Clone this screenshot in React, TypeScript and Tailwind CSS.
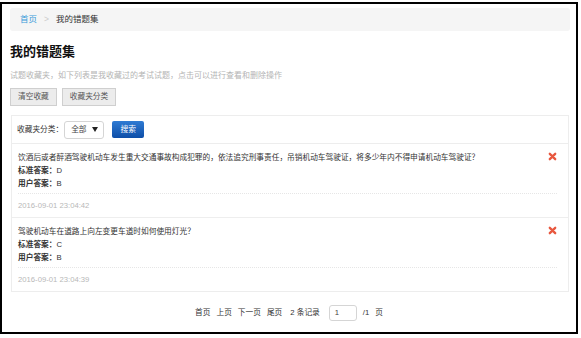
const font = { fontFamily: '"Liberation Sans", "Noto Sans CJK SC", sans-serif' };

type Fav = { q: string; std: string; user: string; time: string };

const favs: Fav[] = [
  {
    q: "饮酒后或者醉酒驾驶机动车发生重大交通事故构成犯罪的，依法追究刑事责任，吊销机动车驾驶证，将多少年内不得申请机动车驾驶证？",
    std: "D",
    user: "B",
    time: "2016-09-01 23:04:42",
  },
  {
    q: "驾驶机动车在道路上向左变更车道时如何使用灯光？",
    std: "C",
    user: "B",
    time: "2016-09-01 23:04:39",
  },
];

const CloseIcon = () => (
  <svg width="9" height="9" viewBox="0 0 10 10" className="shrink-0 mt-[1px]">
    <path d="M2 2 L8 8 M8 2 L2 8" stroke="#e8583f" strokeWidth="2.6" strokeLinecap="round" />
  </svg>
);

const FavItem = ({ item, last }: { item: Fav; last?: boolean }) => (
  <div className={`px-[6px] pt-[7px] pb-[5px] ${last ? "" : "border-b border-[#eeeeee]"}`}>
    <div className="flex justify-between pr-[5px]">
      <div className="leading-[13px] text-[#333]">
        <div>{item.q}</div>
        <div>
          <span className="font-bold">标准答案：</span>
          {item.std}
        </div>
        <div>
          <span className="font-bold">用户答案：</span>
          {item.user}
        </div>
      </div>
      <CloseIcon />
    </div>
    <div className="mt-[3px] mr-[5px] border-t border-dotted border-[#e6e6e6]" />
    <div className="pt-[5px] leading-[13px] text-[#b8b8b8]">{item.time}</div>
  </div>
);

export default function App() {
  return (
    <div className="w-[581px] h-[338px] bg-white pt-[2px] text-[7.7px]" style={font}>
      <div className="w-[578px] h-[332px] border-2 border-black px-[6px] pt-[4px]">
        {/* breadcrumb */}
        <div className="ml-[2px] h-[23px] bg-[#f5f5f5] rounded-[3px] flex items-center px-[10px] gap-[7px] text-[8.5px]">
          <span className="text-[#3a9bd9]">首页</span>
          <span className="text-[#cccccc]">&gt;</span>
          <span className="text-[#333]">我的错题集</span>
        </div>

        <div className="ml-[2px] mt-[13px] text-[13px] font-bold leading-[16px] text-[#111]">我的错题集</div>
        <div className="ml-[2px] mt-[10px] text-[8px] leading-[12px] text-[#b4b4b4]">
          试题收藏夹，如下列表是我收藏过的考试试题，点击可以进行查看和删除操作
        </div>

        <div className="ml-[2px] mt-[6px] flex gap-[5px]">
          <button className="h-[18px] px-[7px] bg-[#ececec] border border-[#cfcfcf] text-[#555]">清空收藏</button>
          <button className="h-[18px] px-[7px] bg-[#ececec] border border-[#cfcfcf] text-[#555]">收藏夹分类</button>
        </div>

        <div className="ml-[3px] mr-[1px] mt-[9px] border border-[#ededed]">
          <div className="h-[28px] flex items-center px-[5px] border-b border-[#ededed] text-[#333]">
            <span>收藏夹分类：</span>
            <div className="ml-[1px] w-[40px] h-[18px] border border-[#d5d5d5] rounded-[3px] flex items-center justify-between pl-[6px] pr-[5px] text-[#444]">
              <span className="mt-[1px]">全部</span>
              <svg width="6" height="5" viewBox="0 0 6 5">
                <path d="M0 0 H6 L3 5 Z" fill="#222" />
              </svg>
            </div>
            <button className="ml-[8px] w-[32px] h-[17px] rounded-[2px] bg-gradient-to-b from-[#2f7bd3] to-[#0d4ea8] text-white text-[7.7px]">
              搜索
            </button>
          </div>
          {favs.map((f, i) => (
            <FavItem key={f.time} item={f} last={i === favs.length - 1} />
          ))}
        </div>

        <div className="mt-[13px] flex items-center justify-center gap-[6px] text-[#333]">
          <span>首页</span>
          <span>上页</span>
          <span>下一页</span>
          <span>尾页</span>
          <span className="ml-[2px]">2 条记录</span>
          <div className="ml-[3px] w-[28px] h-[16px] border border-[#d5d5d5] rounded-[3px] flex items-center pl-[5px] text-[#444]">
            1
          </div>
          <span>/1</span>
          <span>页</span>
        </div>
      </div>
    </div>
  );
}
